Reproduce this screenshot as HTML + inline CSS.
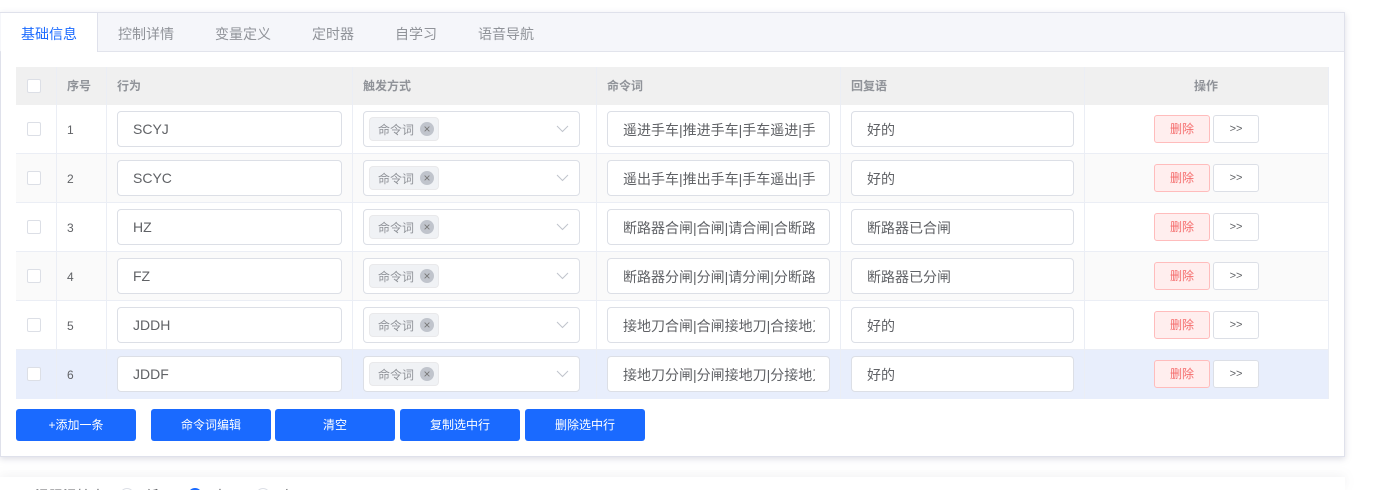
<!DOCTYPE html>
<html lang="zh"><head><meta charset="utf-8"><style>
html,body{margin:0;padding:0;background:#fff;width:1393px;height:490px;overflow:hidden}
body{position:relative;font-family:"Liberation Sans","Noto Sans CJK SC",sans-serif;color:#606266}
div,span{position:absolute;box-sizing:border-box;white-space:nowrap}
#panel{left:0;top:12px;width:1345px;height:445px;background:#fff;border:1px solid #dfe1eb;box-shadow:0 2px 6px rgba(120,125,150,.25)}
#tabs{left:0;top:13px;width:1344px;height:39px;background:#f5f6fa;border-bottom:1px solid #e2e4ec}
#active{left:1px;top:13px;width:97px;height:39px;background:#fff;border-right:1px solid #dfe1eb}
.t{top:24px;font-size:14px;line-height:20px;color:#909399}
.h{left:16px;top:67px;width:1313px;height:38px;background:#f0f0f0}
.ht{top:78px;font-size:12px;line-height:17px;color:#909399;font-weight:bold}
.r{left:16px;width:1313px;height:49px;border-bottom:1px solid #ebeef5;background:#fff}
.v{width:1px;background:#ebeef5;top:67px;height:332px}
.cb{left:27px;width:14px;height:14px;background:#fff;border:1px solid #dcdfe6;border-radius:2px}
.n{left:67px;font-size:12px;line-height:17px;color:#606266;margin-top:1px}
.i{height:36px;background:#fff;border:1px solid #dcdfe6;border-radius:4px;font-size:14px;line-height:35px;padding-left:15px;color:#606266;overflow:hidden}
.z{line-height:37px}
.c{left:15px;top:0;width:192px;height:34px;overflow:hidden;line-height:37px}
.tag{left:369px;width:70px;height:24px;background:#f0f2f5;border:1px solid #e9e9eb;border-radius:4px;font-size:12px;line-height:24px;color:#909399;padding-left:8px}
.x{left:420px;width:14px;height:14px;border-radius:50%;background:#c0c4cc;color:#777;font-size:12px;line-height:14px;text-align:center}
.del{left:1154px;width:56px;height:28px;background:#ffeeee;border:1px solid #ffbcbc;border-radius:3px;color:#f56c6c;font-size:12px;line-height:26px;text-align:center}
.go{left:1213px;width:46px;height:28px;background:#fff;border:1px solid #dcdfe6;border-radius:3px;color:#606266;font-size:11px;line-height:27px;text-align:center}
.b{top:409px;width:120px;height:32px;background:#1a6aff;border-radius:3px;color:#fff;font-size:12px;line-height:32px;text-align:center}
#low{left:0;top:477px;width:1345px;height:13px;background:#fff;box-shadow:0 -2px 10px rgba(150,150,160,.12)}
.rd{top:488px;width:14px;height:14px;border-radius:50%;border:1px solid #dcdfe6;background:#fff}
.lt{top:486px;font-size:14px;line-height:20px;color:#606266}
svg{position:absolute}
</style></head><body>
<div id="panel"></div><div id="tabs"></div><div id="active"></div>
<div class="t" style="left:21px;color:#1a6aff">基础信息</div>
<div class="t" style="left:118px">控制详情</div>
<div class="t" style="left:215px">变量定义</div>
<div class="t" style="left:312px">定时器</div>
<div class="t" style="left:395px">自学习</div>
<div class="t" style="left:478px">语音导航</div>

<div class="h"></div>
<div class="r" style="top:105px"></div>
<div class="r" style="top:154px;background:#fafafa"></div>
<div class="r" style="top:203px"></div>
<div class="r" style="top:252px;background:#fafafa"></div>
<div class="r" style="top:301px"></div>
<div class="r" style="top:350px;background:#e8eefc;border-bottom:0"></div>
<div class="v" style="left:56px"></div><div class="v" style="left:106px"></div><div class="v" style="left:352px"></div><div class="v" style="left:596px"></div><div class="v" style="left:840px"></div><div class="v" style="left:1084px"></div><div class="v" style="left:1328px"></div>

<div class="cb" style="top:79px"></div>
<div class="ht" style="left:67px">序号</div><div class="ht" style="left:117px">行为</div><div class="ht" style="left:363px">触发方式</div><div class="ht" style="left:607px">命令词</div><div class="ht" style="left:851px">回复语</div><div class="ht" style="left:1194px">操作</div>

<!-- row 1 -->
<div class="cb" style="top:122px"></div><div class="n" style="top:121px">1</div>
<div class="i" style="left:117px;top:111px;width:225px">SCYJ</div>
<div class="i" style="left:363px;top:111px;width:217px"></div>
<div class="tag" style="top:117px">命令词</div><div class="x" style="top:122px">×</div>
<svg style="left:556px;top:125px" width="13" height="8" viewBox="0 0 13 8"><path d="M1 1l5.5 5.5L12 1" fill="none" stroke="#c0c4cc"/></svg>
<div class="i" style="left:607px;top:111px;width:223px"><div class="c">遥进手车|推进手车|手车遥进|手车</div></div>
<div class="i z" style="left:851px;top:111px;width:223px">好的</div>
<div class="del" style="top:115px">删除</div><div class="go" style="top:115px">&gt;&gt;</div>

<!-- row 2 -->
<div class="cb" style="top:171px"></div><div class="n" style="top:170px">2</div>
<div class="i" style="left:117px;top:160px;width:225px">SCYC</div>
<div class="i" style="left:363px;top:160px;width:217px"></div>
<div class="tag" style="top:166px">命令词</div><div class="x" style="top:171px">×</div>
<svg style="left:556px;top:174px" width="13" height="8" viewBox="0 0 13 8"><path d="M1 1l5.5 5.5L12 1" fill="none" stroke="#c0c4cc"/></svg>
<div class="i" style="left:607px;top:160px;width:223px"><div class="c">遥出手车|推出手车|手车遥出|手车</div></div>
<div class="i z" style="left:851px;top:160px;width:223px">好的</div>
<div class="del" style="top:164px">删除</div><div class="go" style="top:164px">&gt;&gt;</div>

<!-- row 3 -->
<div class="cb" style="top:220px"></div><div class="n" style="top:219px">3</div>
<div class="i" style="left:117px;top:209px;width:225px">HZ</div>
<div class="i" style="left:363px;top:209px;width:217px"></div>
<div class="tag" style="top:215px">命令词</div><div class="x" style="top:220px">×</div>
<svg style="left:556px;top:223px" width="13" height="8" viewBox="0 0 13 8"><path d="M1 1l5.5 5.5L12 1" fill="none" stroke="#c0c4cc"/></svg>
<div class="i" style="left:607px;top:209px;width:223px"><div class="c">断路器合闸|合闸|请合闸|合断路器</div></div>
<div class="i z" style="left:851px;top:209px;width:223px">断路器已合闸</div>
<div class="del" style="top:213px">删除</div><div class="go" style="top:213px">&gt;&gt;</div>

<!-- row 4 -->
<div class="cb" style="top:269px"></div><div class="n" style="top:268px">4</div>
<div class="i" style="left:117px;top:258px;width:225px">FZ</div>
<div class="i" style="left:363px;top:258px;width:217px"></div>
<div class="tag" style="top:264px">命令词</div><div class="x" style="top:269px">×</div>
<svg style="left:556px;top:272px" width="13" height="8" viewBox="0 0 13 8"><path d="M1 1l5.5 5.5L12 1" fill="none" stroke="#c0c4cc"/></svg>
<div class="i" style="left:607px;top:258px;width:223px"><div class="c">断路器分闸|分闸|请分闸|分断路器</div></div>
<div class="i z" style="left:851px;top:258px;width:223px">断路器已分闸</div>
<div class="del" style="top:262px">删除</div><div class="go" style="top:262px">&gt;&gt;</div>

<!-- row 5 -->
<div class="cb" style="top:318px"></div><div class="n" style="top:317px">5</div>
<div class="i" style="left:117px;top:307px;width:225px">JDDH</div>
<div class="i" style="left:363px;top:307px;width:217px"></div>
<div class="tag" style="top:313px">命令词</div><div class="x" style="top:318px">×</div>
<svg style="left:556px;top:321px" width="13" height="8" viewBox="0 0 13 8"><path d="M1 1l5.5 5.5L12 1" fill="none" stroke="#c0c4cc"/></svg>
<div class="i" style="left:607px;top:307px;width:223px"><div class="c">接地刀合闸|合闸接地刀|合接地刀</div></div>
<div class="i z" style="left:851px;top:307px;width:223px">好的</div>
<div class="del" style="top:311px">删除</div><div class="go" style="top:311px">&gt;&gt;</div>

<!-- row 6 -->
<div class="cb" style="top:367px"></div><div class="n" style="top:366px">6</div>
<div class="i" style="left:117px;top:356px;width:225px">JDDF</div>
<div class="i" style="left:363px;top:356px;width:217px"></div>
<div class="tag" style="top:362px">命令词</div><div class="x" style="top:367px">×</div>
<svg style="left:556px;top:370px" width="13" height="8" viewBox="0 0 13 8"><path d="M1 1l5.5 5.5L12 1" fill="none" stroke="#c0c4cc"/></svg>
<div class="i" style="left:607px;top:356px;width:223px"><div class="c">接地刀分闸|分闸接地刀|分接地刀</div></div>
<div class="i z" style="left:851px;top:356px;width:223px">好的</div>
<div class="del" style="top:360px">删除</div><div class="go" style="top:360px">&gt;&gt;</div>

<div class="b" style="left:16px">+添加一条</div>
<div class="b" style="left:151px">命令词编辑</div>
<div class="b" style="left:275px">清空</div>
<div class="b" style="left:400px">复制选中行</div>
<div class="b" style="left:525px">删除选中行</div>

<div id="low"></div>
<div class="lt" style="left:35px">温限温控中</div>
<div class="rd" style="left:120px"></div><div class="lt" style="left:145px">低</div>
<div class="rd" style="left:188px;background:#1a6aff;border-color:#1a6aff"></div><div class="lt" style="left:213px">中</div>
<div class="rd" style="left:256px"></div><div class="lt" style="left:280px">高</div>
</body></html>
